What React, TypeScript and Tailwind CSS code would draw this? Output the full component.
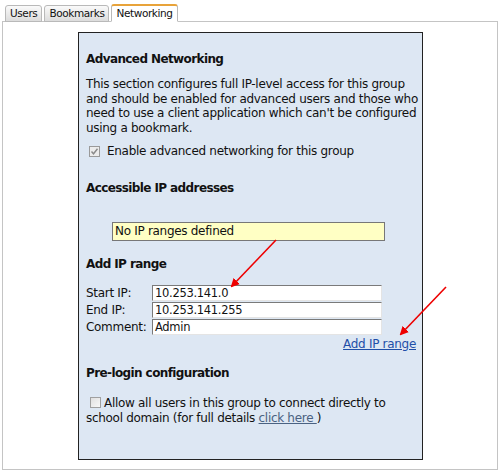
import React from 'react'

const tabs = [
  { label: 'Users', active: false },
  { label: 'Bookmarks', active: false },
  { label: 'Networking', active: true },
]

function Field({ label, value }: { label: string; value: string }) {
  return (
    <div className="flex items-center h-[17px]">
      <span className="w-[66px]">{label}</span>
      <div className="w-[230px] h-[16px] bg-white border border-t-[#7a7a7a] border-l-[#7a7a7a] border-r-[#e4e4e4] border-b-[#e4e4e4] px-[2px] text-[11.5px] leading-[14px]">
        {value}
      </div>
    </div>
  )
}

export default function App() {
  return (
    <div className="relative w-[500px] h-[473px] bg-white font-['DejaVu_Sans',Verdana,sans-serif] text-[12px] tracking-[-0.3px] text-[#111] overflow-hidden">
      {/* tab strip */}
      <div className="flex items-end gap-[2px] pl-[5px] pt-[4px] h-[22px] relative z-10">
        {tabs.map((t) =>
          t.active ? (
            <div
              key={t.label}
              className="h-[18px] px-[4px] bg-white border border-[#b9b9b9] border-b-white border-t-2 border-t-[#e8a33a] rounded-t-[3px] text-[10.5px] tracking-[-0.4px] leading-[14px]"
            >
              {t.label}
            </div>
          ) : (
            <div
              key={t.label}
              className="h-[17px] px-[4px] bg-gradient-to-b from-[#fafafa] to-[#dcdcdc] border border-[#b9b9b9] rounded-t-[3px] text-[10.5px] tracking-[-0.4px] leading-[15px]"
            >
              {t.label}
            </div>
          )
        )}
      </div>

      {/* tab body */}
      <div className="mx-[2px] mt-[-1px] h-[449px] border border-[#c4c4c4] pt-[10px] pl-[75px]">
        <div className="w-[345px] h-[428px] bg-[#dde7f3] border-[1.5px] border-[#222] pl-[7px] pr-0">
          <h2 className="font-bold tracking-[-0.6px] mt-[18px] leading-[16px]">Advanced Networking</h2>
          <p className="mt-[10px] leading-[14.5px]">
            This section configures full IP-level access for this group and should be enabled for advanced users and
            those who need to use a client application which can't be configured using a bookmark.
          </p>
          <label className="flex items-center mt-[8px] h-[16px]">
            <span className="ml-[3px] w-[11px] h-[11px] border border-[#9a9a9a] bg-[#ececec] flex items-center justify-center">
              <svg width="9" height="9" viewBox="0 0 9 9">
                <path d="M1.5 4.5 L3.5 6.8 L7.5 1.8" stroke="#8a8a8a" strokeWidth="1.4" fill="none" />
              </svg>
            </span>
            <span className="ml-[7px]">Enable advanced networking for this group</span>
          </label>

          <h2 className="font-bold tracking-[-0.6px] mt-[21px] leading-[16px]">Accessible IP addresses</h2>
          <div className="ml-[26px] mt-[26px] w-[273px] h-[19px] bg-[#ffffc4] border border-[#777] px-[2px] leading-[17px]">
            No IP ranges defined
          </div>

          <h2 className="font-bold tracking-[-0.6px] mt-[15px] leading-[16px]">Add IP range</h2>
          <div className="mt-[12px] flex flex-col">
            <Field label="Start IP:" value="10.253.141.0" />
            <Field label="End IP:" value="10.253.141.255" />
            <Field label="Comment:" value="Admin" />
          </div>
          <div className="w-[330px] text-right mt-[1px] leading-[16px]">
            <a className="text-[#1f4fa8] underline">Add IP range</a>
          </div>

          <h2 className="font-bold tracking-[-0.6px] mt-[13px] leading-[16px]">Pre-login configuration</h2>
          <div className="w-[330px] mt-[15px] leading-[15px]">
            <span className="inline-block align-[-1px] ml-[4px] mr-[3px] w-[11px] h-[11px] border border-[#a0a0a0] bg-gradient-to-br from-[#e0e0e0] to-[#f8f8f8]" />
            Allow all users in this group to connect directly to school domain (for full details{' '}
            <a className="text-[#4a6282] underline">click here </a>)
          </div>
        </div>
      </div>

      {/* red callout arrows */}
      <svg className="absolute left-0 top-0 pointer-events-none" width="500" height="473">
        <defs>
          <marker id="head" markerWidth="9" markerHeight="9" refX="7" refY="4.5" orient="auto" markerUnits="userSpaceOnUse">
            <path d="M0 0 L9 4.5 L0 9 Z" fill="#ee0000" />
          </marker>
        </defs>
        <line x1="276" y1="240" x2="232" y2="286" stroke="#ee0000" strokeWidth="1.6" markerEnd="url(#head)" />
        <line x1="446" y1="287" x2="401" y2="334" stroke="#ee0000" strokeWidth="1.6" markerEnd="url(#head)" />
      </svg>
    </div>
  )
}
